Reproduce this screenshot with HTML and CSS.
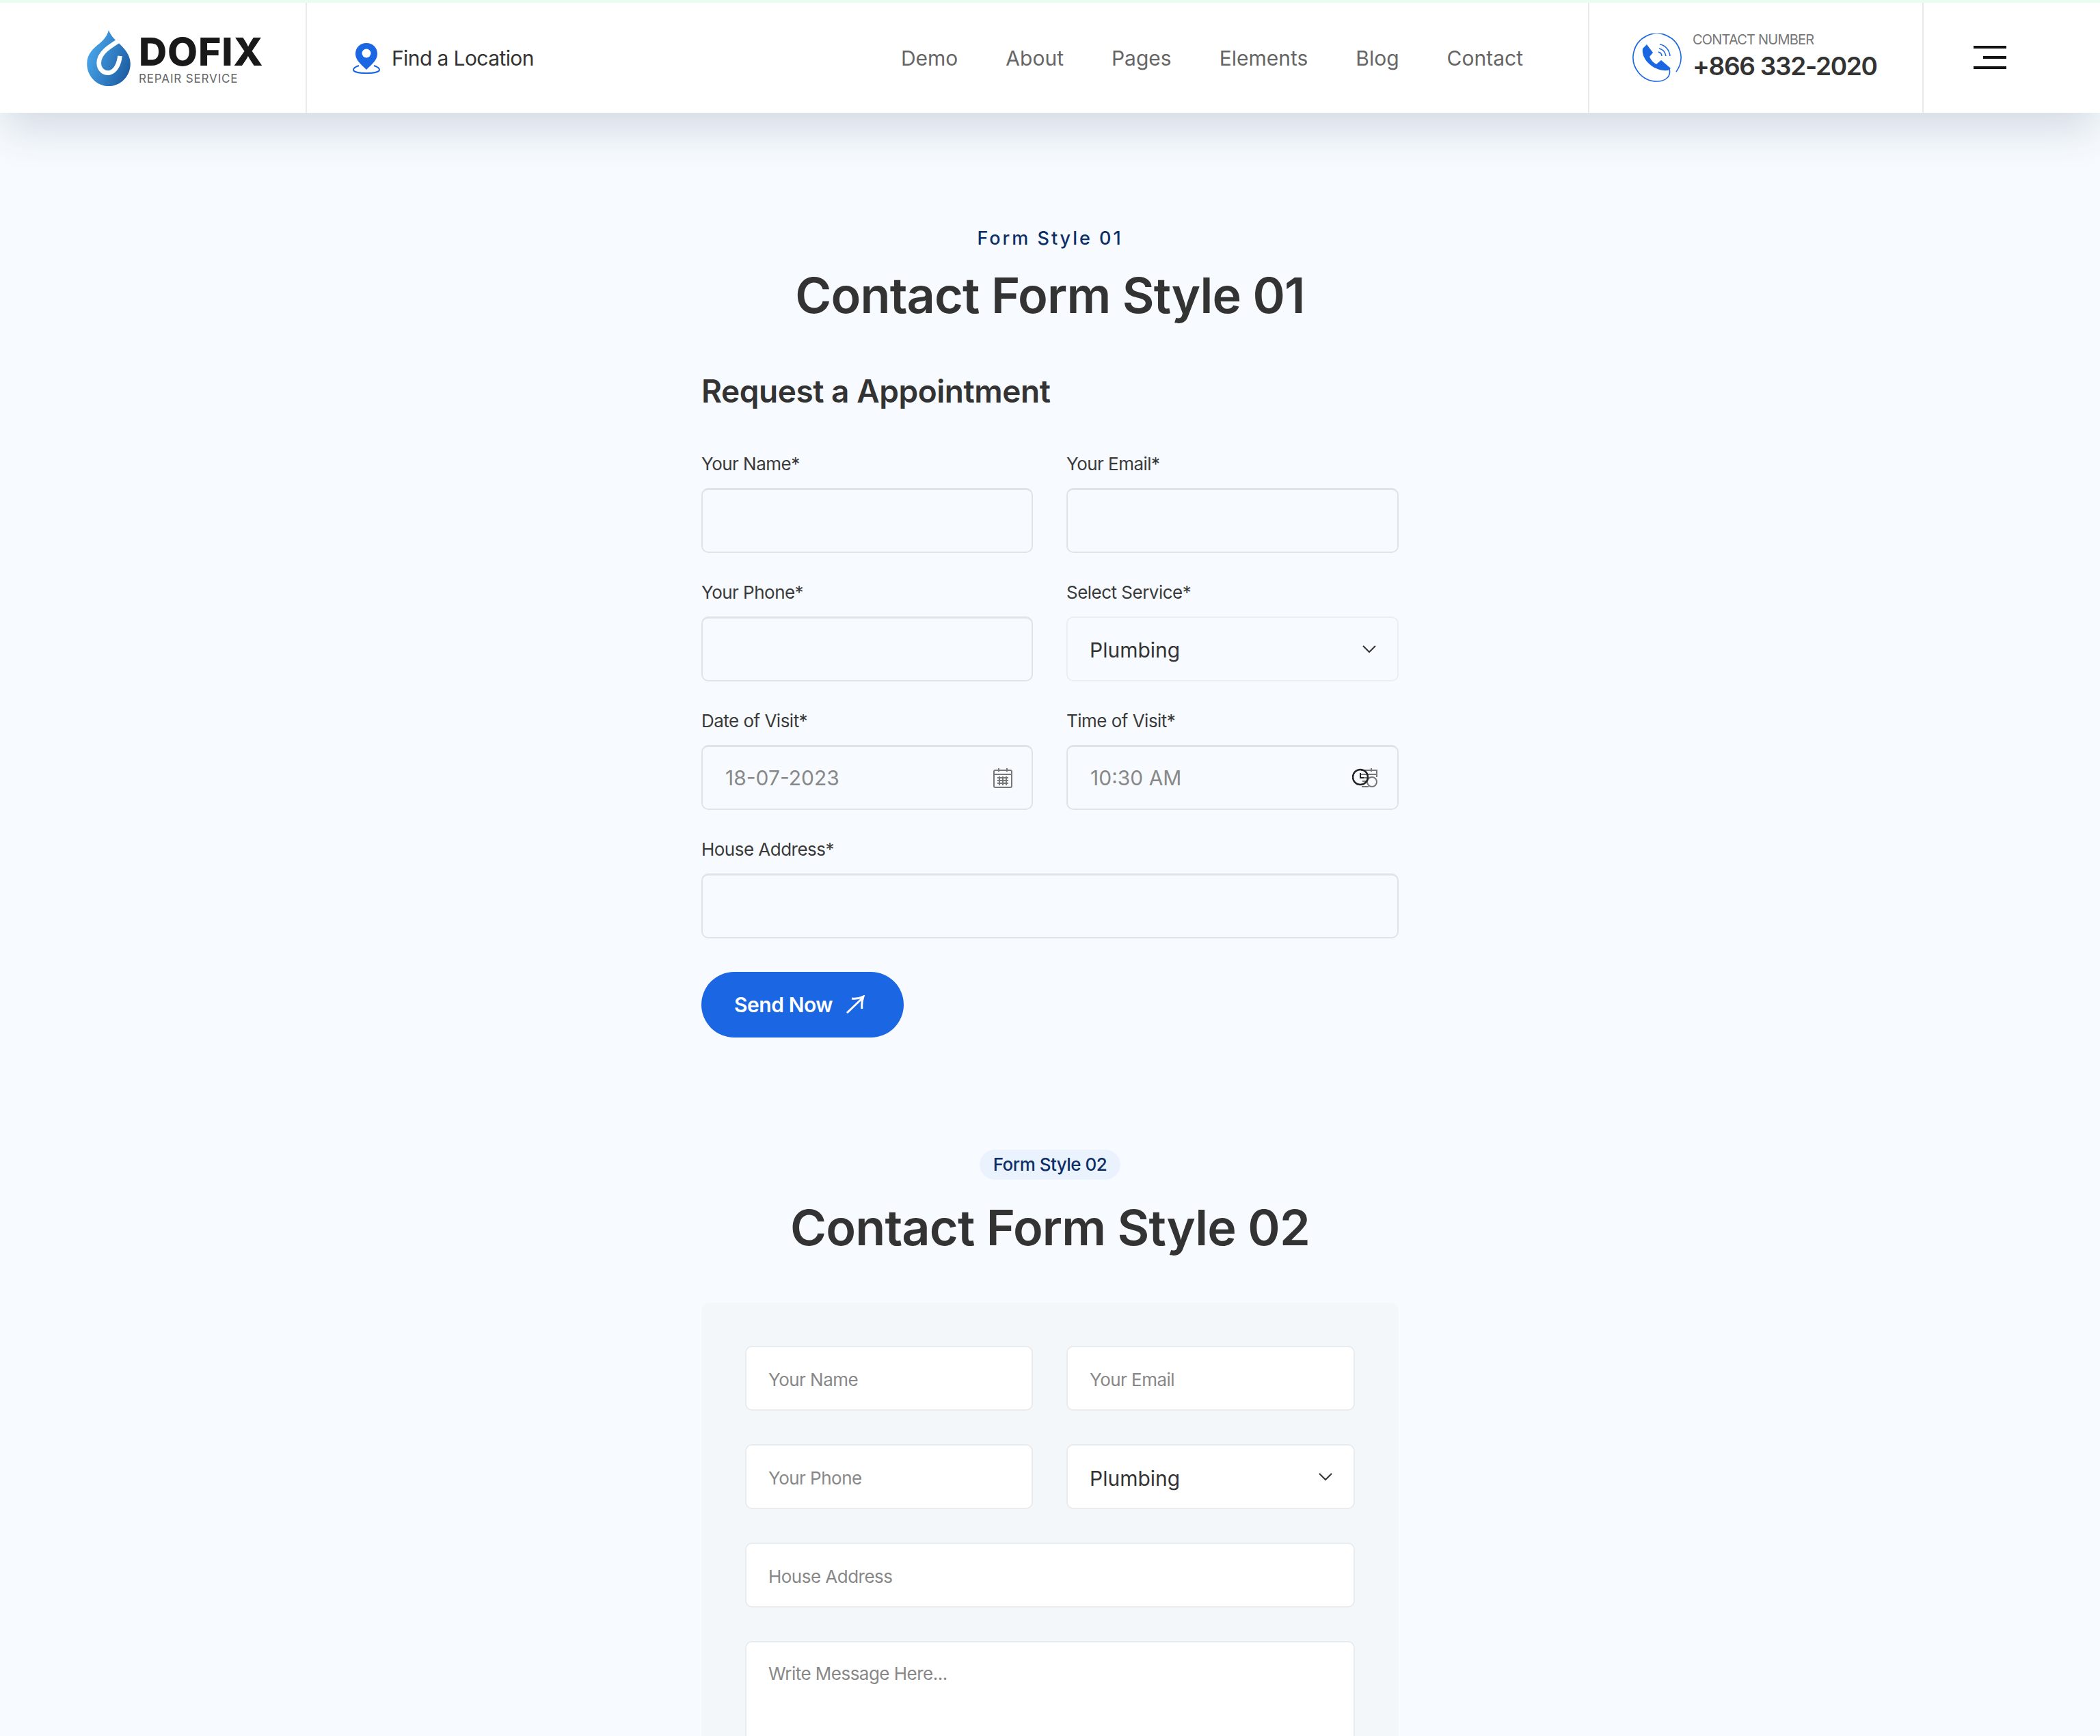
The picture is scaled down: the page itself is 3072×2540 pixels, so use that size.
FILE: index.html
```html
<!DOCTYPE html>
<html lang="en">
<head>
    <meta charset="UTF-8">
    <meta name="viewport" content="width=device-width, initial-scale=1.0">
    <title>Dofix - Contact Forms</title>
    <link rel="stylesheet" href="styles.css">
</head>
<body>

    <header class="header">
        <a class="logo" href="#">
            <svg class="logo-drop" viewBox="13 10 62 80">
                <defs>
                    <linearGradient id="dropFill" x1="0" y1="0.3" x2="1" y2="0.8">
                        <stop offset="0" stop-color="#4ba9ee"/>
                        <stop offset="1" stop-color="#1b5a9f"/>
                    </linearGradient>
                </defs>
                <path d="M44 10C47 18 52 23 57 27C66 36 75 45 75 58C75 76 61 90 44 90C27 90 13 76 13 58C13 44 22 36 31 29C37 24 42 18 44 10Z" fill="url(#dropFill)"/>
                <path d="M62 23C46 33 30 42 30 57C30 66 37 72 45 71C54 69 59 58 60 47" fill="none" stroke="#fff" stroke-width="6.5"/>
            </svg>
            <span class="logo-text">
                <span class="logo-name">DOFIX</span>
                <span class="logo-sub">REPAIR SERVICE</span>
            </span>
        </a>

        <a class="location" href="#">
            <svg class="location-icon" viewBox="0 0 40 46">
                <path d="M20 1C10 1 4 8 4 17C4 26 13 33 20 40C27 33 36 26 36 17C36 8 30 1 20 1Z" fill="#1a66e3"/>
                <circle cx="20" cy="16" r="6.5" fill="#fff"/>
                <path d="M9 34C3 36 1 38 1 40C1 43 9 45 20 45C31 45 39 43 39 40C39 38 37 36 31 34" fill="none" stroke="#1a66e3" stroke-width="2"/>
            </svg>
            <span>Find a Location</span>
        </a>

        <nav class="nav">
            <a href="#">Demo</a>
            <a href="#">About</a>
            <a href="#">Pages</a>
            <a href="#">Elements</a>
            <a href="#">Blog</a>
            <a href="#">Contact</a>
        </nav>

        <div class="phone">
            <svg class="phone-icon" viewBox="8 8 72 72">
                <path d="M72 64A35 35 0 1 0 44 78C55 78 65 72 62 60" fill="none" stroke="#1a66e3" stroke-width="1.6"/>
                <path d="M29 24L38 36L33 42C35 47 39 51 43 53L50 47L64 59L60 62C50 63 38 59 30 50C24 43 22 36 23 30Z" fill="#1a66e3"/>
                <path d="M48 24C56 25 62 32 63 41M47 30C52 31 56 35 57 41M46 35C49 36 51 38 51 41" fill="none" stroke="#1a66e3" stroke-width="1.5"/>
            </svg>
            <div class="phone-text">
                <div class="phone-label">CONTACT NUMBER</div>
                <div class="phone-number">+866 332-2020</div>
            </div>
        </div>

        <div class="burger">
            <span></span>
            <span class="burger-short"></span>
            <span></span>
        </div>
    </header>

    <main class="page">
        <section class="form-section">
            <p class="eyebrow">Form Style 01</p>
            <h2 class="title">Contact Form Style 01</h2>

            <h3 class="form-heading">Request a Appointment</h3>

            <form class="form-grid">
                <div class="field">
                    <label for="name1">Your Name*</label>
                    <input class="input" id="name1" type="text">
                </div>
                <div class="field">
                    <label for="email1">Your Email*</label>
                    <input class="input" id="email1" type="text">
                </div>
                <div class="field">
                    <label for="phone1">Your Phone*</label>
                    <input class="input" id="phone1" type="text">
                </div>
                <div class="field">
                    <label for="service1">Select Service*</label>
                    <div class="control">
                        <select class="input select" id="service1">
                            <option>Plumbing</option>
                        </select>
                        <svg class="control-icon chevron" viewBox="0 0 20 12"><path d="M1 1L10 10L19 1" fill="none" stroke="#333" stroke-width="2"/></svg>
                    </div>
                </div>
                <div class="field">
                    <label for="date1">Date of Visit*</label>
                    <div class="control">
                        <input class="input" id="date1" type="text" value="18-07-2023">
                        <svg class="control-icon calendar" viewBox="0 0 28 30">
                            <rect x="1" y="4" width="26" height="25" rx="2" fill="none" stroke="#777" stroke-width="2"/>
                            <path d="M1 10H27M8 1V6M20 1V6M6 15H22M6 19H22M6 23H22M9 13V26M14 13V26M19 13V26" fill="none" stroke="#777" stroke-width="2"/>
                        </svg>
                    </div>
                </div>
                <div class="field">
                    <label for="time1">Time of Visit*</label>
                    <div class="control">
                        <input class="input" id="time1" type="text" value="10:30 AM">
                        <svg class="control-icon clock" viewBox="0 0 38 30">
                            <path d="M13 4H36V14M13 10H36M28 1V6M14 28H24M15 15H24M15 20H22" fill="none" stroke="#777" stroke-width="2"/>
                            <circle cx="29" cy="21" r="7" fill="#f7fbff" stroke="#777" stroke-width="2"/>
                            <circle cx="12" cy="14" r="11" fill="none" stroke="#222" stroke-width="2.5"/>
                            <path d="M12 8V15H17" fill="none" stroke="#222" stroke-width="2"/>
                        </svg>
                    </div>
                </div>
                <div class="field field-wide">
                    <label for="address1">House Address*</label>
                    <input class="input" id="address1" type="text">
                </div>
            </form>

            <button class="send-btn" type="button">
                Send Now
                <svg class="send-icon" viewBox="0 0 28 28"><path d="M2 26L25 4M9 5C15 6 20 5 26 2C24 8 23 13 24 20" fill="none" stroke="#fff" stroke-width="3"/></svg>
            </button>
        </section>

        <section class="form-section form-section-two">
            <p class="badge">Form Style 02</p>
            <h2 class="title">Contact Form Style 02</h2>

            <form class="panel">
                <input class="input input-white" type="text" placeholder="Your Name">
                <input class="input input-white" type="text" placeholder="Your Email">
                <input class="input input-white" type="text" placeholder="Your Phone">
                <div class="control">
                    <select class="input input-white select">
                        <option>Plumbing</option>
                    </select>
                    <svg class="control-icon chevron" viewBox="0 0 20 12"><path d="M1 1L10 10L19 1" fill="none" stroke="#333" stroke-width="2"/></svg>
                </div>
                <input class="input input-white field-wide" type="text" placeholder="House Address">
                <textarea class="input input-white message field-wide" placeholder="Write Message Here..."></textarea>
            </form>
        </section>

        <div class="cursor"><span></span></div>
    </main>

</body>
</html>
```

FILE: styles.css
```css
* {
    box-sizing: border-box;
}

html, body {
    height: 2540px;
    overflow: hidden;
}

body {
    margin: 0;
    font-family: Inter, "Open Sans", sans-serif;
    background-color: #f7fbff;
    color: #333;
}

a {
    color: inherit;
    text-decoration: none;
}

/* header */
.header {
    position: relative;
    z-index: 2;
    display: flex;
    align-items: stretch;
    height: 165px;
    background-color: #fff;
    border-top: 4px solid #e8fdf0;
    box-shadow: 0 30px 60px -5px rgba(40, 55, 80, 0.16);
}

.logo {
    display: flex;
    align-items: center;
    gap: 12px;
    width: 449px;
    padding-left: 127px;
    border-right: 2px solid #eaeaea;
}

.logo-drop {
    width: 64px;
    height: 82px;
}

.logo-text {
    display: flex;
    flex-direction: column;
    padding-top: 4px;
}

.logo-name {
    font-size: 57px;
    font-weight: 800;
    line-height: 56px;
    letter-spacing: 0.015em;
    color: #191919;
}

.logo-sub {
    font-size: 17px;
    line-height: 22px;
    letter-spacing: 0.05em;
    color: #666;
}

.location {
    display: flex;
    align-items: center;
    gap: 16px;
    padding-left: 66px;
    font-size: 30px;
    letter-spacing: -0.02em;
}

.location-icon {
    width: 42px;
    height: 46px;
}

.nav {
    display: flex;
    align-items: center;
    gap: 70px;
    margin-left: auto;
    padding-right: 95px;
    font-size: 30px;
    color: #666;
}

.phone {
    display: flex;
    align-items: center;
    gap: 16px;
    width: 491px;
    padding-left: 63px;
    border-left: 2px solid #eaeaea;
    border-right: 2px solid #eaeaea;
}

.phone-icon {
    width: 72px;
    height: 72px;
}

.phone-text {
    padding-bottom: 4px;
}

.phone-label {
    font-size: 20px;
    letter-spacing: -0.04em;
    color: #777;
}

.phone-number {
    margin-top: 5px;
    font-size: 37px;
    font-weight: 600;
    line-height: 44px;
    letter-spacing: -0.035em;
    color: #333;
}

.burger {
    display: flex;
    flex-direction: column;
    align-items: flex-end;
    gap: 11px;
    width: 258px;
    padding: 63px 0 0 0;
}

.burger span {
    display: block;
    width: 48px;
    height: 4px;
    margin-right: 137px;
    background-color: #111;
}

.burger .burger-short {
    width: 34px;
}

/* page */
.page {
    position: relative;
    width: 1020px;
    height: 2375px;
    margin: 0 auto;
    padding-top: 165px;
    overflow: hidden;
}

.eyebrow {
    margin: 0;
    text-align: center;
    font-size: 27px;
    line-height: 38px;
    font-weight: 500;
    letter-spacing: 0.11em;
    color: #0d2f66;
}

.title {
    margin: 19px 0 0;
    text-align: center;
    font-size: 72px;
    line-height: 90px;
    font-weight: 600;
    letter-spacing: -0.012em;
    color: #333;
}

.form-heading {
    margin: 66px 0 0;
    font-size: 46px;
    line-height: 58px;
    font-weight: 600;
    letter-spacing: -0.01em;
}

.form-grid {
    display: grid;
    grid-template-columns: 485px 486px;
    justify-content: space-between;
    row-gap: 40px;
    margin-top: 60px;
}

.field-wide {
    grid-column: 1 / -1;
}

.field label {
    display: block;
    margin-bottom: 17px;
    font-size: 26px;
    line-height: 36px;
    letter-spacing: -0.02em;
    color: #3a3a3a;
}

.control {
    position: relative;
}

.input {
    display: block;
    width: 100%;
    height: 95px;
    padding: 0 33px;
    font-family: inherit;
    font-size: 30px;
    color: #888;
    background-color: transparent;
    border: 2px solid #e0e4e8;
    border-top-width: 3px;
    border-radius: 10px;
    outline: none;
}

.input::placeholder {
    color: #888;
    opacity: 1;
}

.select {
    appearance: none;
    padding: 3px 32px 0;
    color: #333;
    border-color: #eceff2;
    border-top-width: 2px;
}

.control-icon {
    position: absolute;
    top: 50%;
    transform: translateY(-50%);
}

.chevron {
    right: 33px;
    width: 20px;
    height: 12px;
}

.calendar {
    right: 30px;
    width: 28px;
    height: 30px;
}

.clock {
    right: 30px;
    width: 38px;
    height: 30px;
}

.send-btn {
    display: flex;
    align-items: center;
    gap: 19px;
    height: 96px;
    margin-top: 49px;
    padding: 0 57px 0 48px;
    font-family: inherit;
    font-size: 30px;
    font-weight: 600;
    letter-spacing: -0.015em;
    color: #fff;
    background-color: #1a66e3;
    border: none;
    border-radius: 48px;
}

.send-icon {
    width: 28px;
    height: 28px;
}

/* second form */
.form-section-two {
    margin-top: 164px;
    text-align: center;
}

.badge {
    display: inline-block;
    margin: 0;
    padding: 0 20px;
    font-size: 26px;
    line-height: 44px;
    font-weight: 500;
    letter-spacing: -0.02em;
    color: #0d2f66;
    background-color: #eaf3fd;
    border-radius: 22px;
}

.form-section-two .title {
    margin-top: 25px;
}

.panel {
    display: grid;
    grid-template-columns: 421px 422px;
    justify-content: space-between;
    gap: 49px 0;
    margin-top: 65px;
    padding: 63px 64px;
    text-align: left;
    background-color: #f3f7fa;
    border-radius: 12px;
}

.input-white {
    padding: 4px 32px 0;
    background-color: #fff;
    border: 2px solid #e9ecef;
    font-size: 26px;
    letter-spacing: -0.02em;
}

.input-white.select {
    font-size: 30px;
    letter-spacing: 0;
}

.message {
    height: 240px;
    padding-top: 30px;
    resize: none;
}

.cursor {
    position: absolute;
    top: 152px;
    left: 1576px;
    display: flex;
    align-items: center;
    justify-content: center;
    width: 40px;
    height: 40px;
    border: 3px solid #555;
    border-radius: 50%;
}

.cursor span {
    width: 8px;
    height: 8px;
    background-color: #000;
    border-radius: 50%;
}
```
